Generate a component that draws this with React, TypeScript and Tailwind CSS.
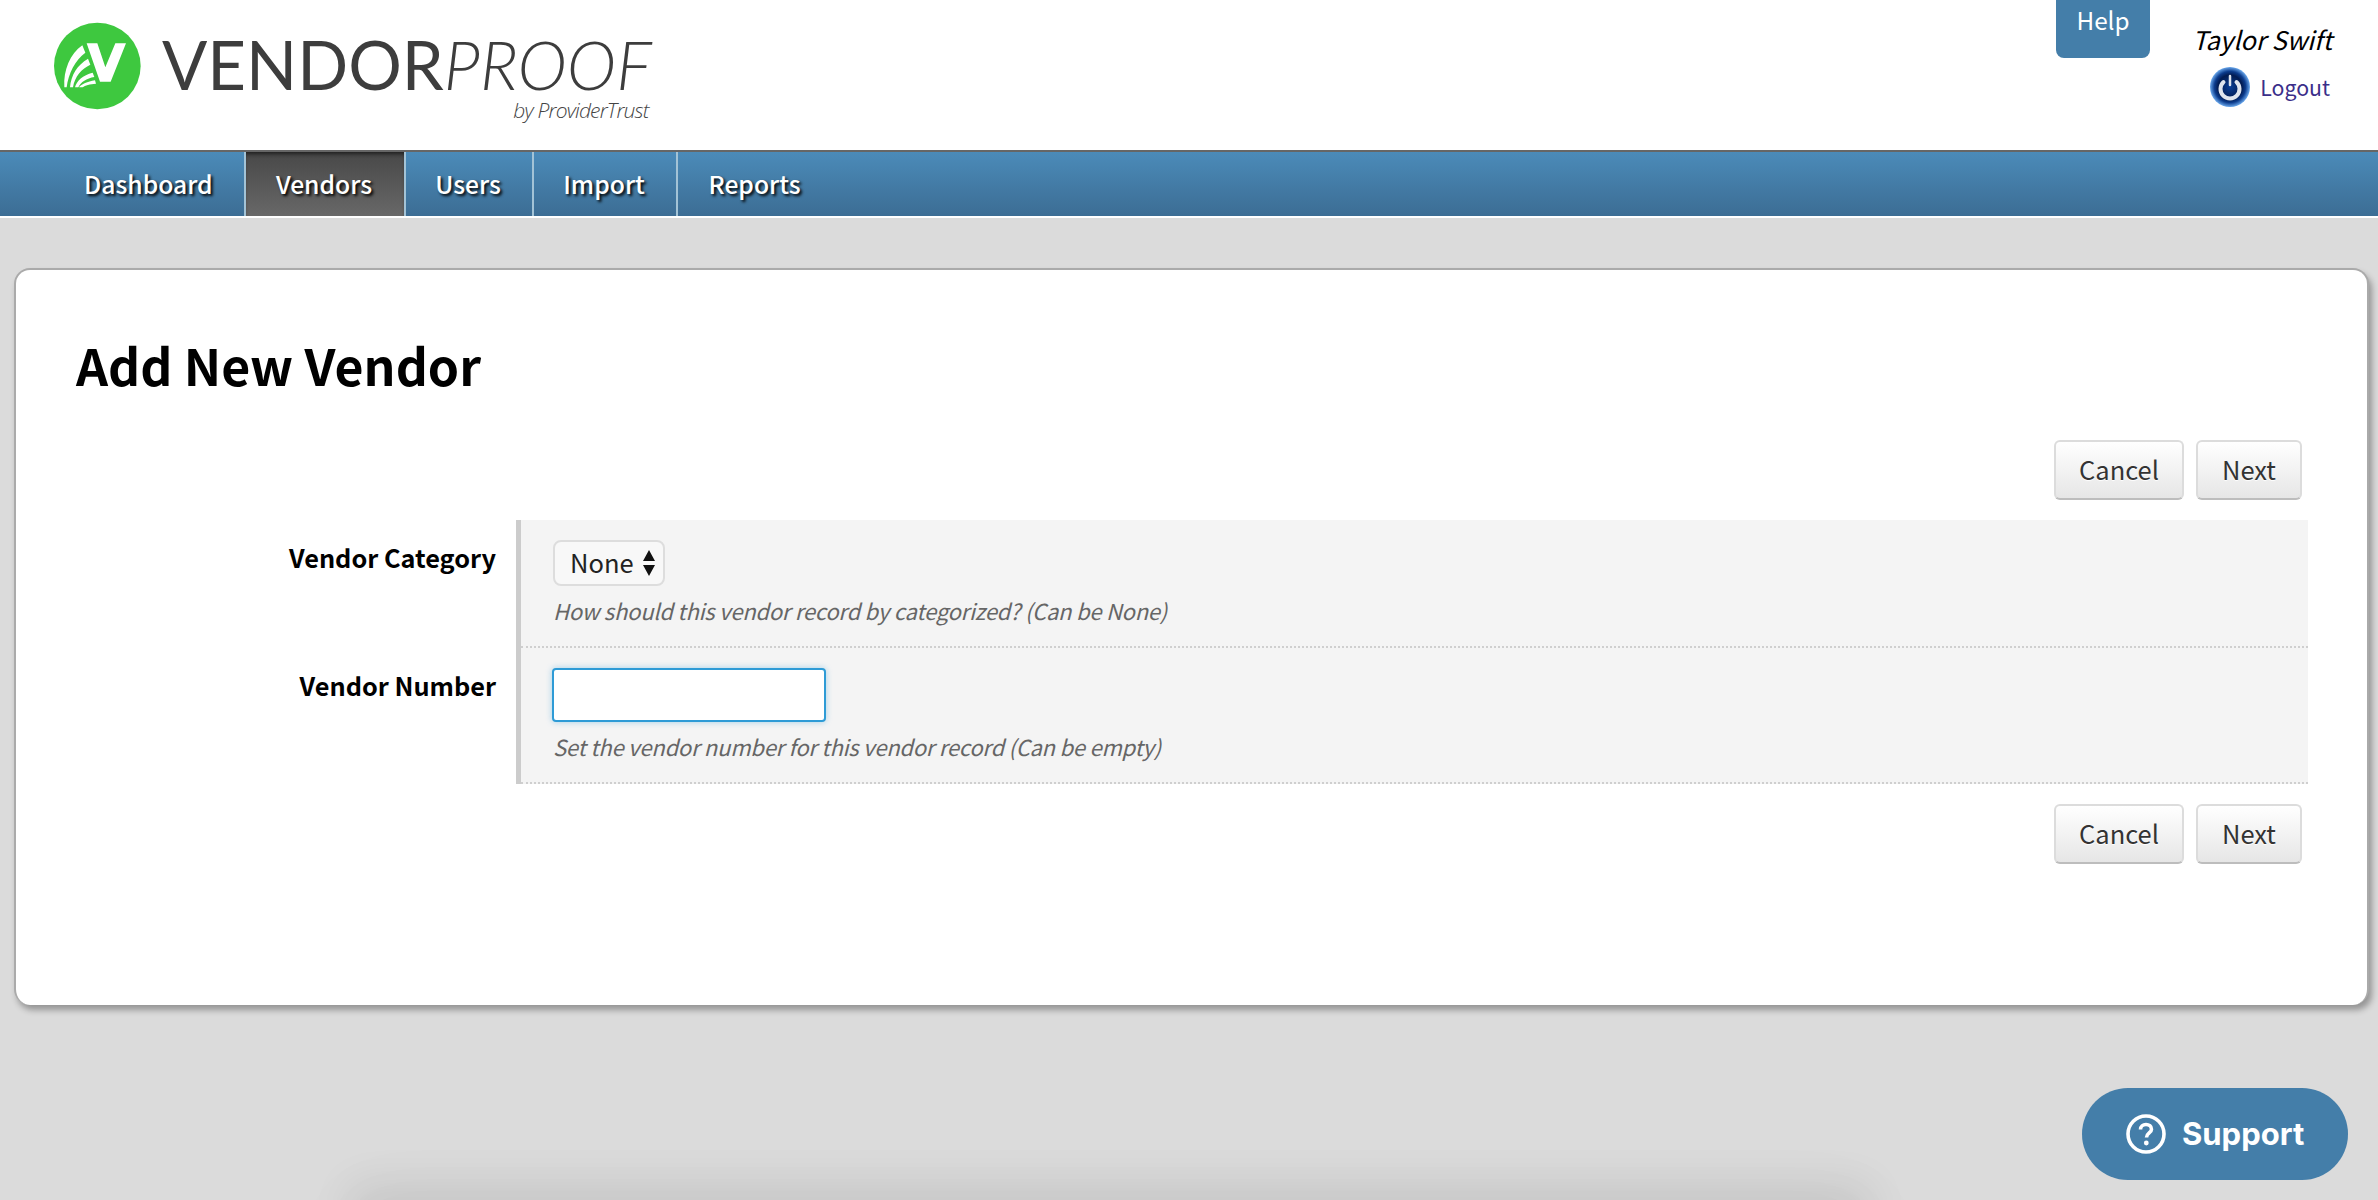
import React from "react";

const sans = "font-['Noto_Sans_CJK_JP','Liberation_Sans',sans-serif]";

function LogoMark() {
  return (
    <svg width="120" height="110" viewBox="0 0 360 330" className="block">
      <circle cx="172" cy="168" r="130" fill="#3ec83f" />
      <path d="M140 100H172L196 172L226 100H258L212 215H180Z" fill="#fff" />
      <path d="M73 232C70 180 90 132 127 106L136 128C106 150 85 190 80 232Z" fill="#fff" />
      <path d="M90 232C93 195 112 165 144 146L151 164C125 176 104 200 99 232Z" fill="#fff" />
      <path d="M105 232C110 212 128 196 158 188L163 201C140 205 122 216 115 232Z" fill="#fff" />
      <path d="M117 232C125 222 142 215 165 211L168 221C150 222 135 226 128 232Z" fill="#fff" />
    </svg>
  );
}

function PowerIcon() {
  return (
    <svg width="40" height="40" viewBox="0 0 40 40" className="block">
      <defs>
        <radialGradient id="pw" cx="50%" cy="50%" r="50%">
          <stop offset="0%" stopColor="#0a3f96" />
          <stop offset="60%" stopColor="#021c52" />
          <stop offset="78%" stopColor="#0b3b8c" />
          <stop offset="100%" stopColor="#6aa8ec" />
        </radialGradient>
      </defs>
      <circle cx="20" cy="20" r="20" fill="url(#pw)" />
      <path d="M13.5 15A9.5 9.5 0 1 0 26.5 15" fill="none" stroke="#dfe5ee" strokeWidth="4" strokeLinecap="round" />
      <path d="M20 9V18" fill="none" stroke="#dfe5ee" strokeWidth="2.5" strokeLinecap="round" />
    </svg>
  );
}

function Actions() {
  const btn =
    "h-[60px] rounded-[6px] border-2 border-[#dcdcdc] border-b-[#bdbdbd] bg-gradient-to-b from-[#ffffff] to-[#e6e6e6] pb-[2px] text-[25.5px] text-[#333333] [text-shadow:0_1px_1px_#fff]";
  return (
    <div className="flex justify-end gap-3 pr-[65px]">
      <button className={`${btn} w-[130px]`}>Cancel</button>
      <button className={`${btn} w-[106px]`}>Next</button>
    </div>
  );
}

function Row({
  label,
  hint,
  children,
  h,
  labelPt,
  hintMt,
}: {
  label: string;
  hint: string;
  children: React.ReactNode;
  h: string;
  labelPt: string;
  hintMt: string;
}) {
  return (
    <div className="flex">
      <div className={`w-[480px] shrink-0 text-right text-[25.3px] font-bold leading-[36px] text-black ${labelPt}`}>{label}</div>
      <div className={`ml-[20px] flex-1 border-l-[5px] border-[#cccccc] bg-[#f4f4f4] ${h}`}>
        <div className="h-full border-b-2 border-dotted border-[#cfcfcf] pl-[32px]">
          {children}
          <div className={`text-[22px] italic leading-[30px] tracking-[-0.24px] text-[#666666] ${hintMt}`}>{hint}</div>
        </div>
      </div>
    </div>
  );
}

export default function App() {
  const navText = "text-[24.7px] font-medium text-white [text-shadow:2px_2px_3px_#000]";
  const navItem = `flex h-full items-center justify-center border-l-2 border-[#a3c3d6] ${navText}`;
  return (
    <div className={`relative h-[1200px] overflow-hidden bg-[#dbdbdb] ${sans}`}>
      <header className="flex h-[150px] justify-between bg-white">
        <div className="flex pl-[40px] pt-[10px]">
          <LogoMark />
          <div className="ml-[2px] flex flex-col items-end">
            <div className="mt-[20px] whitespace-nowrap font-['Lato',sans-serif] text-[67px] font-normal leading-[68px] text-[#3d3d3d]">
              VENDOR<span className="font-light italic">PROOF</span>
            </div>
            <div className="mr-[3px] whitespace-nowrap font-['Open_Sans',sans-serif] text-[21px] font-light italic leading-[24px] tracking-[-0.8px] text-[#444444]">
              by ProviderTrust
            </div>
          </div>
        </div>
        <div className="flex pr-[46px]">
          <a className="flex h-[58px] w-[94px] items-start justify-center rounded-b-[8px] bg-[#447ea9] pt-[2px] text-[24.3px] leading-[36px] text-white">
            Help
          </a>
          <div className="ml-[46px] flex w-[136px] flex-col items-end pt-[21px]">
            <div className="whitespace-nowrap text-[25.5px] italic leading-[36px] text-black">Taylor Swift</div>
            <div className="mr-[2px] mt-[10px] flex items-center gap-[10px]">
              <PowerIcon />
              <span className="text-[21.3px] leading-[36px] text-[#3b2f8a]">Logout</span>
            </div>
          </div>
        </div>
      </header>

      <nav className="h-[68px] border-b-2 border-t-2 border-b-white border-t-[#666666] bg-gradient-to-b from-[#4b8bb9] to-[#3c6d94]">
        <ul className="flex h-full pl-[84px]">
          <li className={`flex h-full w-[160px] items-center ${navText}`}>Dashboard</li>
          <li className={`${navItem} w-[160px] bg-gradient-to-b from-[#484848] to-[#686868] pr-[2px] shadow-[inset_0_4px_4px_-2px_rgba(0,0,0,0.6)]`}>Vendors</li>
          <li className={`${navItem} w-[128px] pr-[2px]`}>Users</li>
          <li className={`${navItem} w-[144px] pr-[2px]`}>Import</li>
          <li className={`${navItem} w-[155px]`}>Reports</li>
        </ul>
      </nav>

      <div className="pl-[14px] pr-[9px] pt-[50px]">
        <main className="h-[737px] rounded-[16px] border-2 border-b-0 border-[#aaaaaa] bg-white shadow-[3px_5px_6px_rgba(0,0,0,0.32)]">
          <h1 className="pl-[60px] pt-[59px] text-[50px] font-bold leading-[70px] text-black">Add New Vendor</h1>
          <div className="mt-[41px]">
            <Actions />
          </div>
          <div className="mt-[20px] pr-[59px]">
            <Row label="Vendor Category" hint="How should this vendor record by categorized? (Can be None)" h="h-[128px]" labelPt="pt-[19px]" hintMt="mt-[9px]">
              <div className="pt-[20px]">
                <div className="relative w-[112px]">
                  <select className="block h-[46px] w-full appearance-none rounded-[8px] border-2 border-[#dddddd] bg-[#f8f8f8] pb-[2px] pl-[15px] text-[25.5px] leading-[36px] text-[#222222]">
                    <option>None</option>
                  </select>
                  <svg width="14" height="28" viewBox="0 0 14 28" className="pointer-events-none absolute right-[9px] top-[9px]">
                    <path d="M7 1L13 12H1Z M1 16H13L7 27Z" fill="#111111" />
                  </svg>
                </div>
              </div>
            </Row>
            <Row label="Vendor Number" hint="Set the vendor number for this vendor record (Can be empty)" h="h-[136px]" labelPt="pt-[19px]" hintMt="mt-[9px]">
              <div className="pt-[20px]">
                <input className="-ml-[1px] block h-[54px] w-[274px] rounded-[4px] border-2 border-[#2e9bd6] bg-white shadow-[0_0_6px_rgba(46,155,214,0.4)] outline-none" />
              </div>
            </Row>
          </div>
          <div className="mt-[20px]">
            <Actions />
          </div>
        </main>
      </div>

      <a className="absolute left-[2082px] top-[1088px] flex h-[92px] w-[266px] items-center rounded-full bg-[#447ea9] pl-[44px] font-['Inter',sans-serif] text-[31px] font-bold text-white">
        <svg width="40" height="40" viewBox="0 0 40 40" className="mr-[16px] shrink-0">
          <circle cx="20" cy="20" r="18" fill="none" stroke="#fff" strokeWidth="3.6" />
          <path d="M14.5 15.5C14.5 12.4 17 10.5 20 10.5C23 10.5 25.5 12.3 25.5 15.2C25.5 19 20.5 19 20.5 23.5" fill="none" stroke="#fff" strokeWidth="3.6" />
          <circle cx="20.3" cy="29" r="2.4" fill="#fff" />
        </svg>
        Support
      </a>
      <div className="absolute left-[350px] top-[1200px] h-[200px] w-[1520px] shadow-[0_-16px_40px_rgba(0,0,0,0.075),0_0_80px_rgba(0,0,0,0.04)]" />
    </div>
  );
}
